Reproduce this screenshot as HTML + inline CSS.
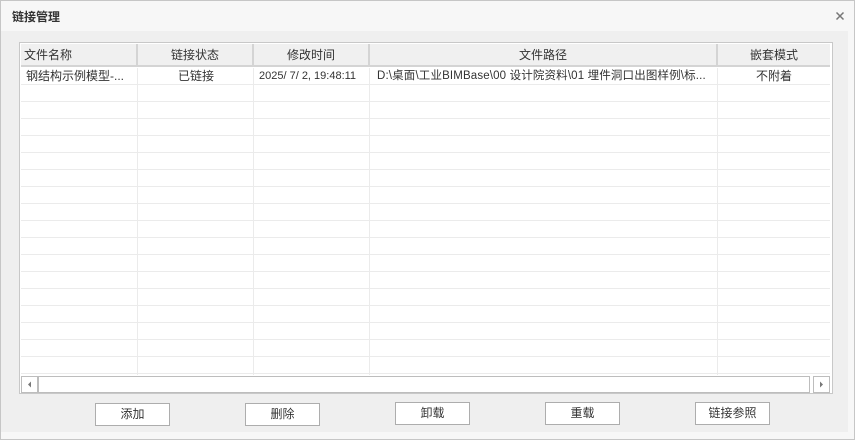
<!DOCTYPE html>
<html><head><meta charset="utf-8"><style>
*{margin:0;padding:0;box-sizing:border-box}
body{width:855px;height:440px;background:#f7f7f7;font-family:"Liberation Sans","Noto Sans CJK SC",sans-serif;font-size:12px;color:#333;position:relative;overflow:hidden}
.frame{position:absolute;left:0;top:0;width:855px;height:440px;border:1px solid #c6c6c6}
.title{position:absolute;left:12px;top:8px;font-size:12px;font-weight:bold;color:#333}
.content{position:absolute;left:1px;top:31px;width:847px;height:401px;background:#efefef}
.grid{position:absolute;left:19px;top:42px;width:814px;height:352px;border:1px solid #c8c8c8;background:#fff}
.hdr{position:absolute;left:21px;top:44px;width:809px;height:23px;background:#f0f0f0;border-bottom:2px solid #d4d4d4}
.hc{position:absolute;top:44px;height:23px;line-height:23px;text-align:center;color:#333;font-size:12px;border-right:2px solid #d4d4d4}
.vl{position:absolute;top:68px;height:307px;width:1px;background:#ebebeb}
.hl{position:absolute;left:21px;width:809px;height:1px;background:#ebebeb}
.cell{position:absolute;top:68px;height:16px;line-height:16px;font-size:12px;color:#333}
.sb{position:absolute;top:376px;height:17px;border:1px solid #bdbdbd;background:#fff}
.btn{position:absolute;top:403px;width:75px;height:23px;border:1px solid #adadad;background:#fff;text-align:center;line-height:21px;font-size:12px;color:#333}
</style></head><body>
<div class="frame"></div>
<div class="title">链接管理</div>
<svg width="10" height="10" style="position:absolute;left:835px;top:11px"><path d="M1.5 1.5L8.5 8.5M8.5 1.5L1.5 8.5" stroke="#777" stroke-width="1.5"/></svg>
<div class="content"></div>
<div class="grid"></div>
<div class="hdr"></div>
<div class="hc" style="left:21px;width:117px;text-align:left;padding-left:3px">文件名称</div>
<div class="hc" style="left:138px;width:116px">链接状态</div>
<div class="hc" style="left:254px;width:116px">修改时间</div>
<div class="hc" style="left:370px;width:348px">文件路径</div>
<div class="hc" style="left:718px;width:112px;border-right:none">嵌套模式</div>
<div class="vl" style="left:137px"></div>
<div class="vl" style="left:253px"></div>
<div class="vl" style="left:369px"></div>
<div class="vl" style="left:717px"></div>
<div class="hl" style="top:84px"></div><div class="hl" style="top:101px"></div><div class="hl" style="top:118px"></div><div class="hl" style="top:135px"></div><div class="hl" style="top:152px"></div><div class="hl" style="top:169px"></div><div class="hl" style="top:186px"></div><div class="hl" style="top:203px"></div><div class="hl" style="top:220px"></div><div class="hl" style="top:237px"></div><div class="hl" style="top:254px"></div><div class="hl" style="top:271px"></div><div class="hl" style="top:288px"></div><div class="hl" style="top:305px"></div><div class="hl" style="top:322px"></div><div class="hl" style="top:339px"></div><div class="hl" style="top:356px"></div><div class="hl" style="top:373px"></div>
<div class="cell" style="left:26px">钢结构示例模型-...</div>
<div class="cell" style="left:138px;width:116px;text-align:center">已链接</div>
<div class="cell" style="left:259px;font-size:11px">2025/ 7/ 2, 19:48:11</div>
<div class="cell" style="left:377px;font-size:11.5px;white-space:nowrap;letter-spacing:0.15px">D:\桌面\工业BIMBase\00 设计院资料\01 埋件洞口出图样例\标...</div>
<div class="cell" style="left:718px;width:112px;text-align:center">不附着</div>
<div class="sb" style="left:21px;width:17px"><svg width="15" height="15" style="position:absolute;left:0;top:0"><path d="M6 7.5L9 4.5V10.5Z" fill="#777"/></svg></div>
<div class="sb" style="left:38px;width:772px"></div>
<div class="sb" style="left:813px;width:17px"><svg width="15" height="15" style="position:absolute;left:0;top:0"><path d="M9 7.5L6 4.5V10.5Z" fill="#777"/></svg></div>
<div class="btn" style="left:95px;top:403px">添加</div>
<div class="btn" style="left:245px;top:403px">删除</div>
<div class="btn" style="left:395px;top:402px">卸载</div>
<div class="btn" style="left:545px;top:402px">重载</div>
<div class="btn" style="left:695px;top:402px">链接参照</div>
</body></html>
